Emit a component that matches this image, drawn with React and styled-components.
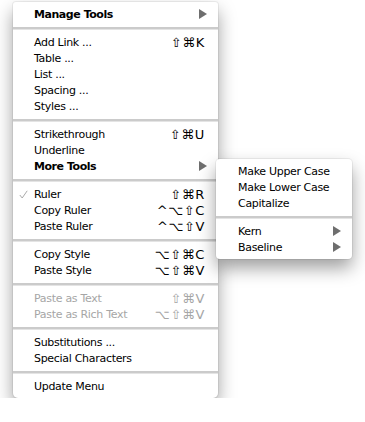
import styled, { createGlobalStyle } from 'styled-components';

const GlobalStyle = createGlobalStyle`
  body {
    margin: 0;
    background: #fff;
    font-family: "DejaVu Sans", "Liberation Sans", sans-serif;
    -webkit-font-smoothing: antialiased;
  }
`;

const Page = styled.div`
  padding: 2px 0 0 13px;
`;

const Menu = styled.div`
  position: relative;
  width: ${p => p.width}px;
  padding: 4px 0;
  background: #fff;
  border-radius: 3px 3px 5px 5px;
  box-shadow: 0 0 0 1px rgba(0, 0, 0, 0.06), 0 9px 18px rgba(0, 0, 0, 0.38);
`;

const Item = styled.div`
  position: relative;
  display: flex;
  align-items: center;
  height: 16px;
  padding-right: ${p => p.padRight || 12}px;
  font-size: 11px;
  letter-spacing: ${p => (p.bold ? '-0.45px' : '-0.3px')};
  font-weight: ${p => (p.bold ? 700 : 400)};
  color: ${p => (p.disabled ? '#a6a6a6' : '#000')};
  white-space: nowrap;
`;

const Gutter = styled.span`
  display: flex;
  justify-content: flex-end;
  align-items: center;
  flex: none;
  width: ${p => p.width || 21}px;
  padding-right: 6px;
  box-sizing: border-box;
`;

const Label = styled.span`
  flex: 1;
`;

const Shortcut = styled.span`
  font-size: 13px;
  letter-spacing: 0.6px;
  margin-right: 1px;
`;

const Arrow = styled.span`
  width: 0;
  height: 0;
  border-left: 8px solid #6e6e6e;
  border-top: 5px solid transparent;
  border-bottom: 5px solid transparent;
`;

const Separator = styled.div`
  padding: 5px 0 4px;

  &::before {
    content: '';
    display: block;
    height: 2px;
    background: #cbcbcb;
    border-bottom: 1px solid #e4e4e4;
  }
`;

const SubMenu = styled(Menu)`
  position: absolute;
  left: calc(100% - 2px);
  top: 1px;
  z-index: 2;
  border-radius: 4px;
  letter-spacing: normal;
  font-weight: 400;
`;

const Check = () => (
  <svg width="9" height="9" viewBox="0 0 9 9">
    <polyline points="0.8,5 3.2,8 8.2,0.8" fill="none" stroke="#a0a0a0" strokeWidth="0.9" />
  </svg>
);

const MenuItem = ({ label, shortcut, bold, disabled, checked, submenu, children, gutter }) => (
  <Item bold={bold} disabled={disabled} padRight={submenu ? 11 : 12}>
    <Gutter width={gutter}>{checked && <Check />}</Gutter>
    <Label>{label}</Label>
    {shortcut && <Shortcut>{shortcut}</Shortcut>}
    {submenu && <Arrow />}
    {children}
  </Item>
);

export default function App() {
  return (
    <Page>
      <GlobalStyle />
      <Menu width={205}>
        <MenuItem label="Manage Tools" bold submenu />
        <Separator />
        <MenuItem label="Add Link ..." shortcut="⇧⌘K" />
        <MenuItem label="Table ..." />
        <MenuItem label="List ..." />
        <MenuItem label="Spacing ..." />
        <MenuItem label="Styles ..." />
        <Separator />
        <MenuItem label="Strikethrough" shortcut="⇧⌘U" />
        <MenuItem label="Underline" />
        <MenuItem label="More Tools" bold submenu>
          <SubMenu width={136}>
            <MenuItem gutter={22} label="Make Upper Case" />
            <MenuItem gutter={22} label="Make Lower Case" />
            <MenuItem gutter={22} label="Capitalize" />
            <Separator />
            <MenuItem gutter={22} label="Kern" submenu />
            <MenuItem gutter={22} label="Baseline" submenu />
          </SubMenu>
        </MenuItem>
        <Separator />
        <MenuItem label="Ruler" checked shortcut="⇧⌘R" />
        <MenuItem label="Copy Ruler" shortcut="^⌥⇧C" />
        <MenuItem label="Paste Ruler" shortcut="^⌥⇧V" />
        <Separator />
        <MenuItem label="Copy Style" shortcut="⌥⇧⌘C" />
        <MenuItem label="Paste Style" shortcut="⌥⇧⌘V" />
        <Separator />
        <MenuItem label="Paste as Text" disabled shortcut="⇧⌘V" />
        <MenuItem label="Paste as Rich Text" disabled shortcut="⌥⇧⌘V" />
        <Separator />
        <MenuItem label="Substitutions ..." />
        <MenuItem label="Special Characters" />
        <Separator />
        <MenuItem label="Update Menu" />
      </Menu>
    </Page>
  );
}
